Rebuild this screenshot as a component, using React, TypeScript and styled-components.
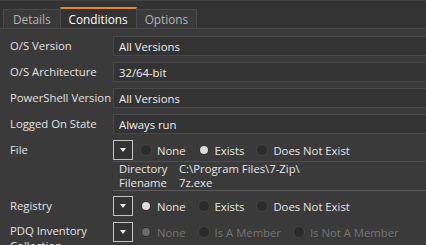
import { createGlobalStyle } from "styled-components";
import styled from "styled-components";

const GlobalStyle = createGlobalStyle`
  body {
    margin: 0;
    background: #333333;
    font-family: "Open Sans", "Noto Sans", sans-serif;
    font-size: 11.3px;
    color: #dedede;
  }
`;

const Window = styled.div`
  width: 426px;
  height: 245px;
  overflow: hidden;
  background: #333333;
  border-top: 1px solid #424242;
  box-sizing: border-box;
`;

const TabBar = styled.div`
  display: flex;
  align-items: flex-end;
  height: 27px;
  padding-left: 4px;
  border-bottom: 1px solid #4a4a4a;
`;

interface TabProps {
  active?: boolean;
}

const Tab = styled.div<TabProps>`
  height: ${(p) => (p.active ? "21px" : "19px")};
  padding: 0 8px;
  display: flex;
  align-items: center;
  box-sizing: border-box;
  background: ${(p) => (p.active ? "#333333" : "#3a3a3a")};
  color: ${(p) => (p.active ? "#ffffff" : "#b4b4b4")};
  border: 1px solid #4a4a4a;
  border-top: ${(p) => (p.active ? "2px solid #e8861c" : "1px solid #4a4a4a")};
  border-bottom: none;
  margin-left: -1px;
  font-size: 11.8px;

  &:first-child {
    padding: 0 9px;
  }
`;

const Panel = styled.div`
  background: #3a3a3a;
  padding-top: 7px;
  display: flex;
  flex-direction: column;
  gap: 6px;
  height: 100%;
`;

interface RowProps {
  top?: boolean;
}

const Row = styled.div<RowProps>`
  display: grid;
  grid-template-columns: 113px 1fr;
  align-items: ${(p) => (p.top ? "start" : "center")};
`;

const Label = styled.div<RowProps>`
  padding-left: 10px;
  padding-top: ${(p) => (p.top ? "1px" : "0")};
  color: #e2e2e2;
  line-height: ${(p) => (p.top ? "15px" : "14px")};
`;

const TextBox = styled.div`
  height: 20px;
  box-sizing: border-box;
  background: #333333;
  border-top: 1px solid #484848;
  border-bottom: 1px solid #484848;
  border-left: 1px solid #484848;
  display: flex;
  align-items: center;
  padding-left: 5px;
  color: #f0f0f0;
`;

const Controls = styled.div`
  display: flex;
  align-items: center;
  height: 20px;
`;

const DropButton = styled.div`
  width: 20px;
  height: 20px;
  box-sizing: border-box;
  border: 1px solid #c4c4c4;
  background: #333333;
  display: flex;
  align-items: center;
  justify-content: center;
  margin-right: 7px;
`;

const Arrow = styled.div`
  width: 0;
  height: 0;
  border-left: 3.5px solid transparent;
  border-right: 3.5px solid transparent;
  border-top: 4px solid #e8e8e8;
`;

interface RadioProps {
  checked?: boolean;
  disabled?: boolean;
}

const RadioItem = styled.div<RadioProps>`
  display: flex;
  align-items: center;
  gap: 5px;
  margin-right: 12px;
  color: ${(p) => (p.disabled ? "#767676" : "#e6e6e6")};
`;

const Circle = styled.span<RadioProps>`
  width: 12px;
  height: 12px;
  box-sizing: border-box;
  border-radius: 50%;
  background: #2b2b2b;
  border: 1px solid #444444;
  display: flex;
  align-items: center;
  justify-content: center;

  &::after {
    content: "";
    display: ${(p) => (p.checked ? "block" : "none")};
    width: 8px;
    height: 8px;
    border-radius: 50%;
    background: ${(p) => (p.disabled ? "#6a6a6a" : "#dcdcdc")};
  }
`;

const Details = styled.div`
  grid-column: 2;
  margin-top: 1px;
  margin-bottom: -1px;
  border-top: 1px solid #4e4e4e;
  border-bottom: 1px solid #5a5a5a;
  padding-left: 6px;
  line-height: 14px;
  color: #e6e6e6;
`;

const DetailLine = styled.div`
  display: flex;
`;

const DetailKey = styled.span`
  flex: 0 0 60px;
`;

function Radio({
  label,
  checked,
  disabled,
}: {
  label: string;
  checked?: boolean;
  disabled?: boolean;
}) {
  return (
    <RadioItem disabled={disabled}>
      <Circle checked={checked} disabled={disabled} />
      {label}
    </RadioItem>
  );
}

const fields = [
  { label: "O/S Version", value: "All Versions" },
  { label: "O/S Architecture", value: "32/64-bit" },
  { label: "PowerShell Version", value: "All Versions" },
  { label: "Logged On State", value: "Always run" },
];

export default function App() {
  return (
    <>
      <GlobalStyle />
      <Window>
        <TabBar>
          <Tab>Details</Tab>
          <Tab active>Conditions</Tab>
          <Tab>Options</Tab>
        </TabBar>
        <Panel>
          {fields.map((f) => (
            <Row key={f.label}>
              <Label>{f.label}</Label>
              <TextBox>{f.value}</TextBox>
            </Row>
          ))}
          <Row>
            <Label>File</Label>
            <Controls>
              <DropButton>
                <Arrow />
              </DropButton>
              <Radio label="None" />
              <Radio label="Exists" checked />
              <Radio label="Does Not Exist" />
            </Controls>
            <Details>
              <DetailLine>
                <DetailKey>Directory</DetailKey>
                <span>C:\Program Files\7-Zip\</span>
              </DetailLine>
              <DetailLine>
                <DetailKey>Filename</DetailKey>
                <span>7z.exe</span>
              </DetailLine>
            </Details>
          </Row>
          <Row>
            <Label>Registry</Label>
            <Controls>
              <DropButton>
                <Arrow />
              </DropButton>
              <Radio label="None" checked />
              <Radio label="Exists" />
              <Radio label="Does Not Exist" />
            </Controls>
          </Row>
          <Row top>
            <Label top>PDQ Inventory Collection</Label>
            <Controls>
              <DropButton>
                <Arrow />
              </DropButton>
              <Radio label="None" checked disabled />
              <Radio label="Is A Member" disabled />
              <Radio label="Is Not A Member" disabled />
            </Controls>
          </Row>
        </Panel>
      </Window>
    </>
  );
}
